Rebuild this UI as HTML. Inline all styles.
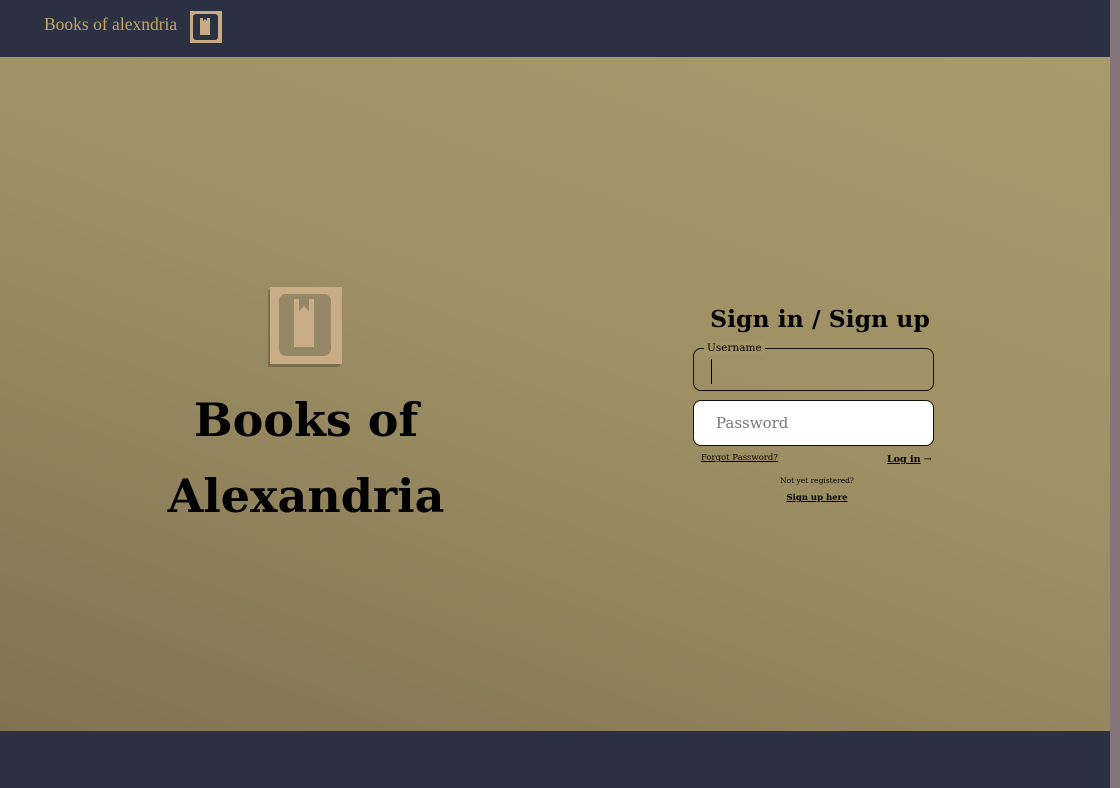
<!DOCTYPE html>
<html><head><meta charset="utf-8"><style>
*{margin:0;padding:0;box-sizing:border-box}
body{width:1120px;height:788px;overflow:hidden;position:relative;font-family:"DejaVu Serif","Liberation Serif",serif;background:#2b3142}
.hdr{position:absolute;left:0;top:0;width:1110px;height:57px;background:#2b3142}
.strip{position:absolute;left:1110px;top:0;width:10px;height:788px;background:#857479}
.main{position:absolute;left:0;top:57px;width:1110px;height:674px;background:linear-gradient(200deg,#a89a6a 0%,#9e9064 45%,#7f7352 100%)}
.foot{position:absolute;left:0;top:731px;width:1110px;height:57px;background:#2b3142}
.brand{position:absolute;left:44px;top:14px;font-family:"Liberation Serif",serif;font-size:17.5px;color:#c6a660}
.title{position:absolute;left:100px;width:412px;top:382px;text-align:center;font-weight:bold;font-size:46px;line-height:76px;color:#000}
h2{position:absolute;left:690px;width:260px;top:305px;text-align:center;font-size:23.5px;font-weight:bold;color:#000}
.f1{position:absolute;left:693px;top:348px;width:241px;height:43px;border:1px solid #111;border-radius:8px}
.f1 span{position:absolute;left:10px;top:-8px;font-size:10.5px;background:#a29466;padding:0 3px;line-height:14px}
.f1 i{position:absolute;left:17px;top:10px;width:1px;height:25px;background:#000}
.f2{position:absolute;left:693px;top:400px;width:241px;height:46px;border:1px solid #111;border-radius:8px;background:#fff;font-size:15px;color:#777;padding:13px 0 0 22px}
.sm{position:absolute;font-size:8.5px;color:#000}
u{text-decoration:underline}
</style></head><body>
<div class="hdr"></div>
<div class="brand">Books of alexndria</div>
<svg style="position:absolute;left:189px;top:10px" width="34" height="34" viewBox="0 0 34 34">
<rect x="1" y="1" width="32" height="32" fill="#c7ab85"/>
<rect x="4" y="4" width="25" height="26" rx="3" fill="#2b3142"/>
<path d="M11 8h3v3l2-2 2 2v-3h3v17h-10z" fill="#c7ab85"/></svg>
<div class="main"></div>
<svg style="position:absolute;left:266px;top:286px" width="78" height="82" viewBox="0 0 78 82">
<rect x="2" y="4" width="72" height="77" fill="#7a6e50"/>
<rect x="4" y="1" width="72" height="77" fill="#c9ad86"/>
<rect x="13" y="8" width="52" height="62" rx="7" fill="#958866"/>
<path d="M28 13h5v12l5-5 5 5V13h5v48H28z" fill="#c9ad86"/></svg>
<div class="title">Books of Alexandria</div>
<h2>Sign in / Sign up</h2>
<div class="f1"><span>Username</span><i></i></div>
<div class="f2">Password</div>
<div class="sm" style="left:701px;top:453px"><u>Forgot Password?</u></div>
<div class="sm" style="left:887px;top:454px;font-size:9.5px;font-weight:bold"><u>Log in</u> <span style="font-weight:normal">→</span></div>
<div class="sm" style="left:693px;width:248px;text-align:center;top:476px;font-size:7.5px">Not yet registered?</div>
<div class="sm" style="left:693px;width:248px;text-align:center;top:493px;font-weight:bold"><u>Sign up here</u></div>
<div class="foot"></div>
<div class="strip"></div>
</body></html>
